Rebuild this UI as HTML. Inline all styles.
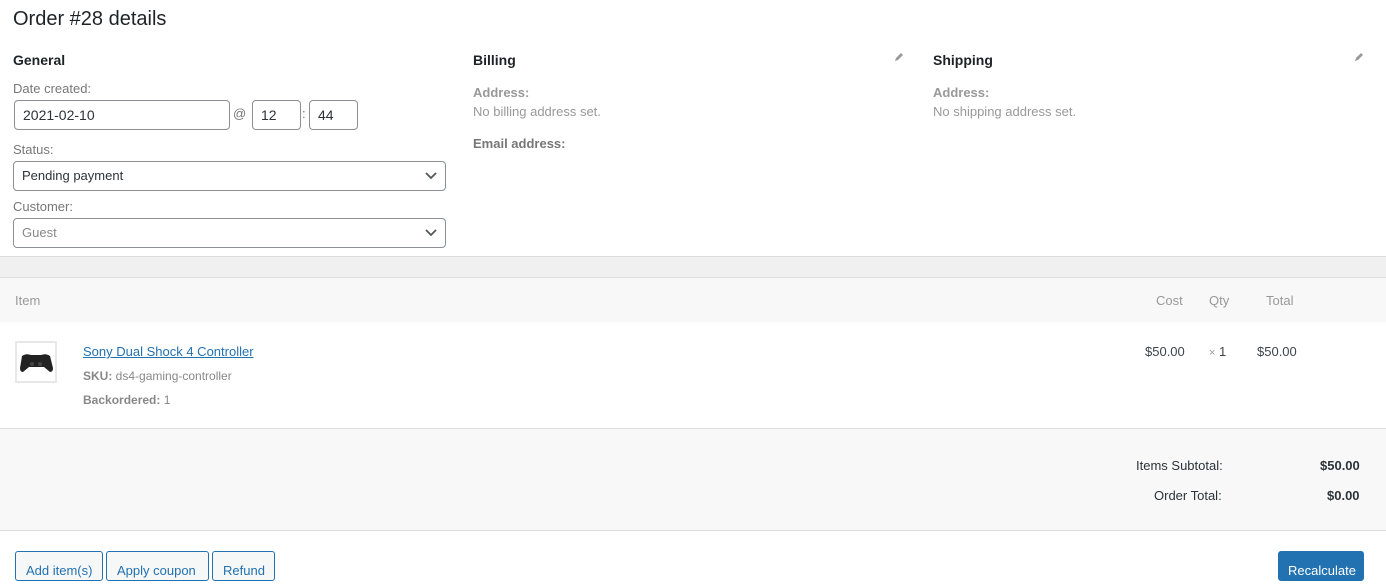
<!DOCTYPE html>
<html><head><meta charset="utf-8"><style>
*{box-sizing:border-box;margin:0;padding:0}
body{width:1386px;height:567px;overflow:hidden;background:#fff;font-family:"Liberation Sans",sans-serif;font-size:13px;color:#3c434a;position:relative}
.a{position:absolute;white-space:nowrap}
.lbl{color:#777}
.h{font-weight:bold;color:#1d2327;font-size:14px}
.in{position:absolute;border:1px solid #8c8f94;border-radius:4px;background:#fff;padding:0 8px;line-height:28px;font-size:14px;color:#2c3338;white-space:nowrap}
.chev{position:absolute;right:8px;top:10px;width:12px;height:8px}
.band{position:absolute;left:0;width:1386px}
.btn{position:absolute;top:551px;height:30px;border:1px solid #2271b1;border-radius:3px;color:#2271b1;background:#f6f7f7;font-size:13px;line-height:30px;padding:0 10px;white-space:nowrap}
.pen{position:absolute;width:10px;height:10px}
</style></head><body>
<div class="a" style="left:13px;top:8px;font-size:20px;color:#1d2327">Order #28 details</div>

<div class="a h" style="left:13px;top:52px">General</div>
<div class="a lbl" style="left:13px;top:81px">Date created:</div>
<div class="in" style="left:14px;top:100px;width:216px;height:30px">2021-02-10</div>
<div class="a lbl" style="left:233px;top:106px">@</div>
<div class="in" style="left:252px;top:100px;width:49px;height:30px">12</div>
<div class="a lbl" style="left:302px;top:106px">:</div>
<div class="in" style="left:309px;top:100px;width:49px;height:30px">44</div>
<div class="a lbl" style="left:13px;top:142px">Status:</div>
<div class="in" style="left:13px;top:161px;width:433px;height:30px;font-size:13px">Pending payment<svg class="chev" viewBox="0 0 12 8"><path d="M1 1l5 5 5-5" fill="none" stroke="#50575e" stroke-width="1.8"/></svg></div>
<div class="a lbl" style="left:13px;top:199px">Customer:</div>
<div class="in" style="left:13px;top:218px;width:433px;height:30px;color:#888;font-size:13px">Guest<svg class="chev" viewBox="0 0 12 8"><path d="M1 1l5 5 5-5" fill="none" stroke="#50575e" stroke-width="1.8"/></svg></div>

<div class="a h" style="left:473px;top:52px">Billing</div>
<svg class="pen" style="left:894px;top:52px" viewBox="0 0 10 10"><path d="M1 9l1-3 5-5 2 2-5 5z" fill="#999"/></svg>
<div class="a" style="left:473px;top:85px;color:#999;font-weight:bold">Address:</div>
<div class="a" style="left:473px;top:104px;color:#999">No billing address set.</div>
<div class="a" style="left:473px;top:136px;color:#777;font-weight:bold">Email address:</div>

<div class="a h" style="left:933px;top:52px">Shipping</div>
<svg class="pen" style="left:1354px;top:52px" viewBox="0 0 10 10"><path d="M1 9l1-3 5-5 2 2-5 5z" fill="#999"/></svg>
<div class="a" style="left:933px;top:85px;color:#999;font-weight:bold">Address:</div>
<div class="a" style="left:933px;top:104px;color:#999">No shipping address set.</div>

<div class="band" style="top:256px;height:22px;background:#f0f0f1;border-top:1px solid #ddd;border-bottom:1px solid #ddd"></div>
<div class="band" style="top:278px;height:44px;background:#f8f8f8"></div>
<div class="a" style="left:15px;top:293px;color:#999">Item</div>
<div class="a" style="left:1156px;top:293px;color:#999">Cost</div>
<div class="a" style="left:1209px;top:293px;color:#999">Qty</div>
<div class="a" style="left:1266px;top:293px;color:#999">Total</div>

<div style="position:absolute;left:15px;top:341px;width:42px;height:42px;border:2px solid #e8e8e8;background:#fff">
<svg width="38" height="38" viewBox="0 0 38 38"><path d="M5 13q4-3 9-1h10q5-2 9 1l3 12q0 4-3 4l-6-5H12l-6 5q-3 0-3-4z" fill="#222"/><circle cx="15" cy="21" r="2" fill="#444"/><circle cx="23" cy="21" r="2" fill="#444"/></svg></div>
<div class="a" style="left:83px;top:344px;color:#2271b1;text-decoration:underline">Sony Dual Shock 4 Controller</div>
<div class="a" style="left:83px;top:369px;color:#888;font-size:12px"><b>SKU:</b> ds4-gaming-controller</div>
<div class="a" style="left:83px;top:393px;color:#888;font-size:12px"><b>Backordered:</b> 1</div>
<div class="a" style="left:1145px;top:344px">$50.00</div>
<div class="a" style="left:1209px;top:344px"><span style="color:#999;font-size:11px">×</span> 1</div>
<div class="a" style="left:1257px;top:344px">$50.00</div>

<div class="band" style="top:428px;height:103px;background:#f8f8f8;border-top:1px solid #ddd;border-bottom:1px solid #ddd"></div>
<div class="a" style="left:1136px;top:458px;color:#2c3338">Items Subtotal:</div>
<div class="a" style="left:1320px;top:458px;font-weight:bold;color:#2c3338">$50.00</div>
<div class="a" style="left:1154px;top:488px;color:#2c3338">Order Total:</div>
<div class="a" style="left:1327px;top:488px;font-weight:bold;color:#2c3338">$0.00</div>

<div class="btn" style="left:15px;width:88px;padding-top:4px">Add item(s)</div>
<div class="btn" style="left:106px;width:103px;padding-top:4px">Apply coupon</div>
<div class="btn" style="left:212px;width:63px;padding-top:4px">Refund</div>
<div class="btn" style="left:1278px;width:86px;background:#2271b1;color:#fff;padding:4px 9px 0">Recalculate</div>
</body></html>
